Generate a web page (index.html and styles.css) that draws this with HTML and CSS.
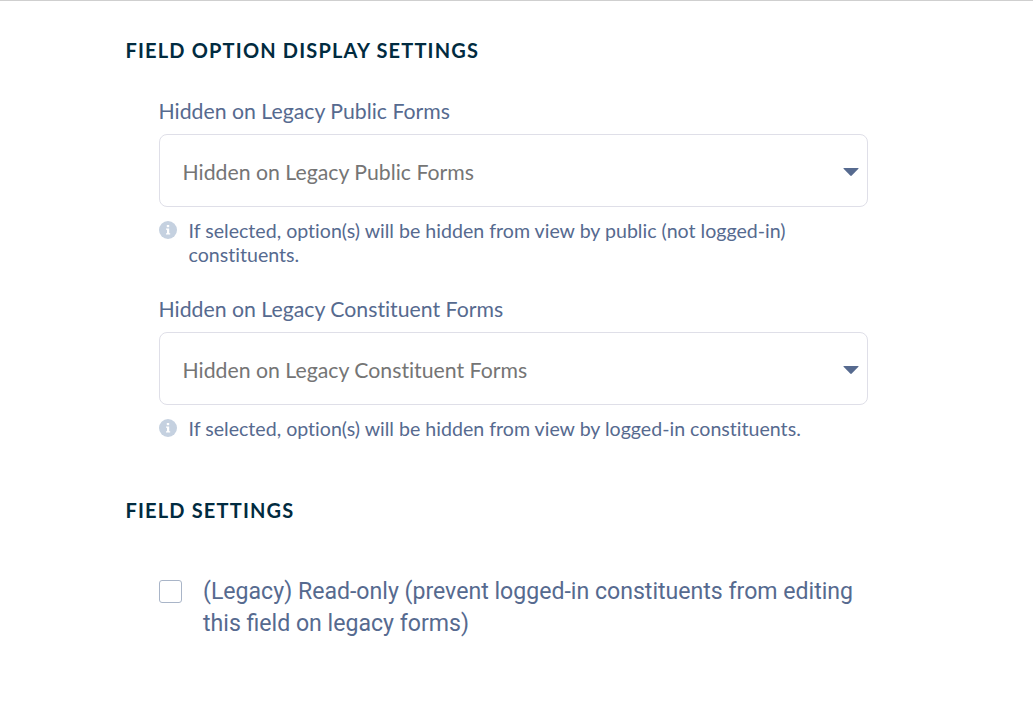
FILE: index.html
```html
<!DOCTYPE html>
<html lang="en">
<head>
  <meta charset="UTF-8" />
  <title>Field Settings</title>
  <link rel="stylesheet" href="styles.css">
</head>
<body>
  <main class="panel">
    <h2 class="section-title">Field Option Display Settings</h2>
    <div class="field">
      <label class="field-label">Hidden on Legacy Public Forms</label>
      <div class="select-box">
        <span>Hidden on Legacy Public Forms</span>
        <svg class="caret" width="16" height="10" viewBox="0 0 16 10"><path d="M1 1h14q1 0 .4.8L8.8 8.6q-.8.8-1.6 0L.6 1.800Q0 1 1 1z" fill="#566a8f"/></svg>
      </div>
      <div class="help">
        <svg class="info" width="18" height="18" viewBox="0 0 18 18"><circle cx="9" cy="9" r="9" fill="#c5d1e0"/><rect x="7.800" y="4" width="2.400" height="2.200" fill="#fff"/><path d="M7 7.500h3.200v4.700h1v1.300H7v-1.300h1V8.800H7z" fill="#fff"/></svg>
        <p>If selected, option(s) will be hidden from view by public (not logged-in) constituents.</p>
      </div>
    </div>
    <div class="field">
      <label class="field-label">Hidden on Legacy Constituent Forms</label>
      <div class="select-box">
        <span>Hidden on Legacy Constituent Forms</span>
        <svg class="caret" width="16" height="10" viewBox="0 0 16 10"><path d="M1 1h14q1 0 .4.8L8.8 8.6q-.8.8-1.6 0L.6 1.800Q0 1 1 1z" fill="#566a8f"/></svg>
      </div>
      <div class="help">
        <svg class="info" width="18" height="18" viewBox="0 0 18 18"><circle cx="9" cy="9" r="9" fill="#c5d1e0"/><rect x="7.800" y="4" width="2.400" height="2.200" fill="#fff"/><path d="M7 7.500h3.200v4.700h1v1.300H7v-1.300h1V8.800H7z" fill="#fff"/></svg>
        <p>If selected, option(s) will be hidden from view by logged-in constituents.</p>
      </div>
    </div>

    <h2 class="section-title second">Field Settings</h2>
    <div class="check-row">
      <span class="checkbox"></span>
      <span class="check-label">(Legacy) Read-only (prevent logged-in constituents from editing this field on legacy forms)</span>
    </div>
  </main>
</body>
</html>
```

FILE: styles.css
```css
html, body {
  margin: 0;
  padding: 0;
}

body {
  background-color: #fff;
  font-family: Lato, sans-serif;
  font-variant-ligatures: none;
  border-top: 1px solid #cfcfcf;
  height: 709px;
  overflow: hidden;
}

.panel {
  padding: 37px 0 0 125.500px;
  width: 742.500px;
}

.section-title {
  margin: 0;
  font-size: 20px;
  line-height: 24px;
  font-weight: 700;
  letter-spacing: 1.170px;
  text-transform: uppercase;
  color: #012b40;
}

.section-title.second {
  margin-top: 57px;
}

.field {
  margin-left: 33.500px;
  margin-top: 37px;
}

.field + .field {
  margin-top: 30px;
}

.field-label {
  display: block;
  font-size: 21.250px;
  line-height: 24px;
  color: #566a8f;
  margin-bottom: 11px;
  margin-left: -.5px;
}

.select-box {
  display: flex;
  align-items: center;
  justify-content: space-between;
  box-sizing: border-box;
  height: 73px;
  padding: 2px 8px 0 22.500px;
  border: 1px solid #dfdfe8;
  border-radius: 8px;
  font-size: 21.250px;
  color: #757575;
}

.caret {
  margin-top: 1px;
}

.help {
  display: flex;
  gap: 12px;
  margin-top: 12px;
  font-size: 19.600px;
  line-height: 24px;
  color: #566a8f;
}

.help p {
  margin: 0;
  width: 640px;
}

.info {
  flex: none;
  margin-top: 2px;
  margin-left: -.5px;
}

.check-row {
  display: flex;
  margin: 53px 0 0 33.500px;
}

.checkbox {
  flex: none;
  box-sizing: border-box;
  width: 23px;
  height: 23px;
  margin-top: 5px;
  border: 1px solid #a9b5c8;
  border-radius: 3px;
}

.check-label {
  margin-left: 21px;
  margin-top: 1px;
  font-family: Roboto, sans-serif;
  font-variant-ligatures: normal;
  font-size: 23.100px;
  line-height: 32px;
  color: #566a8f;
  width: 670px;
}
```
